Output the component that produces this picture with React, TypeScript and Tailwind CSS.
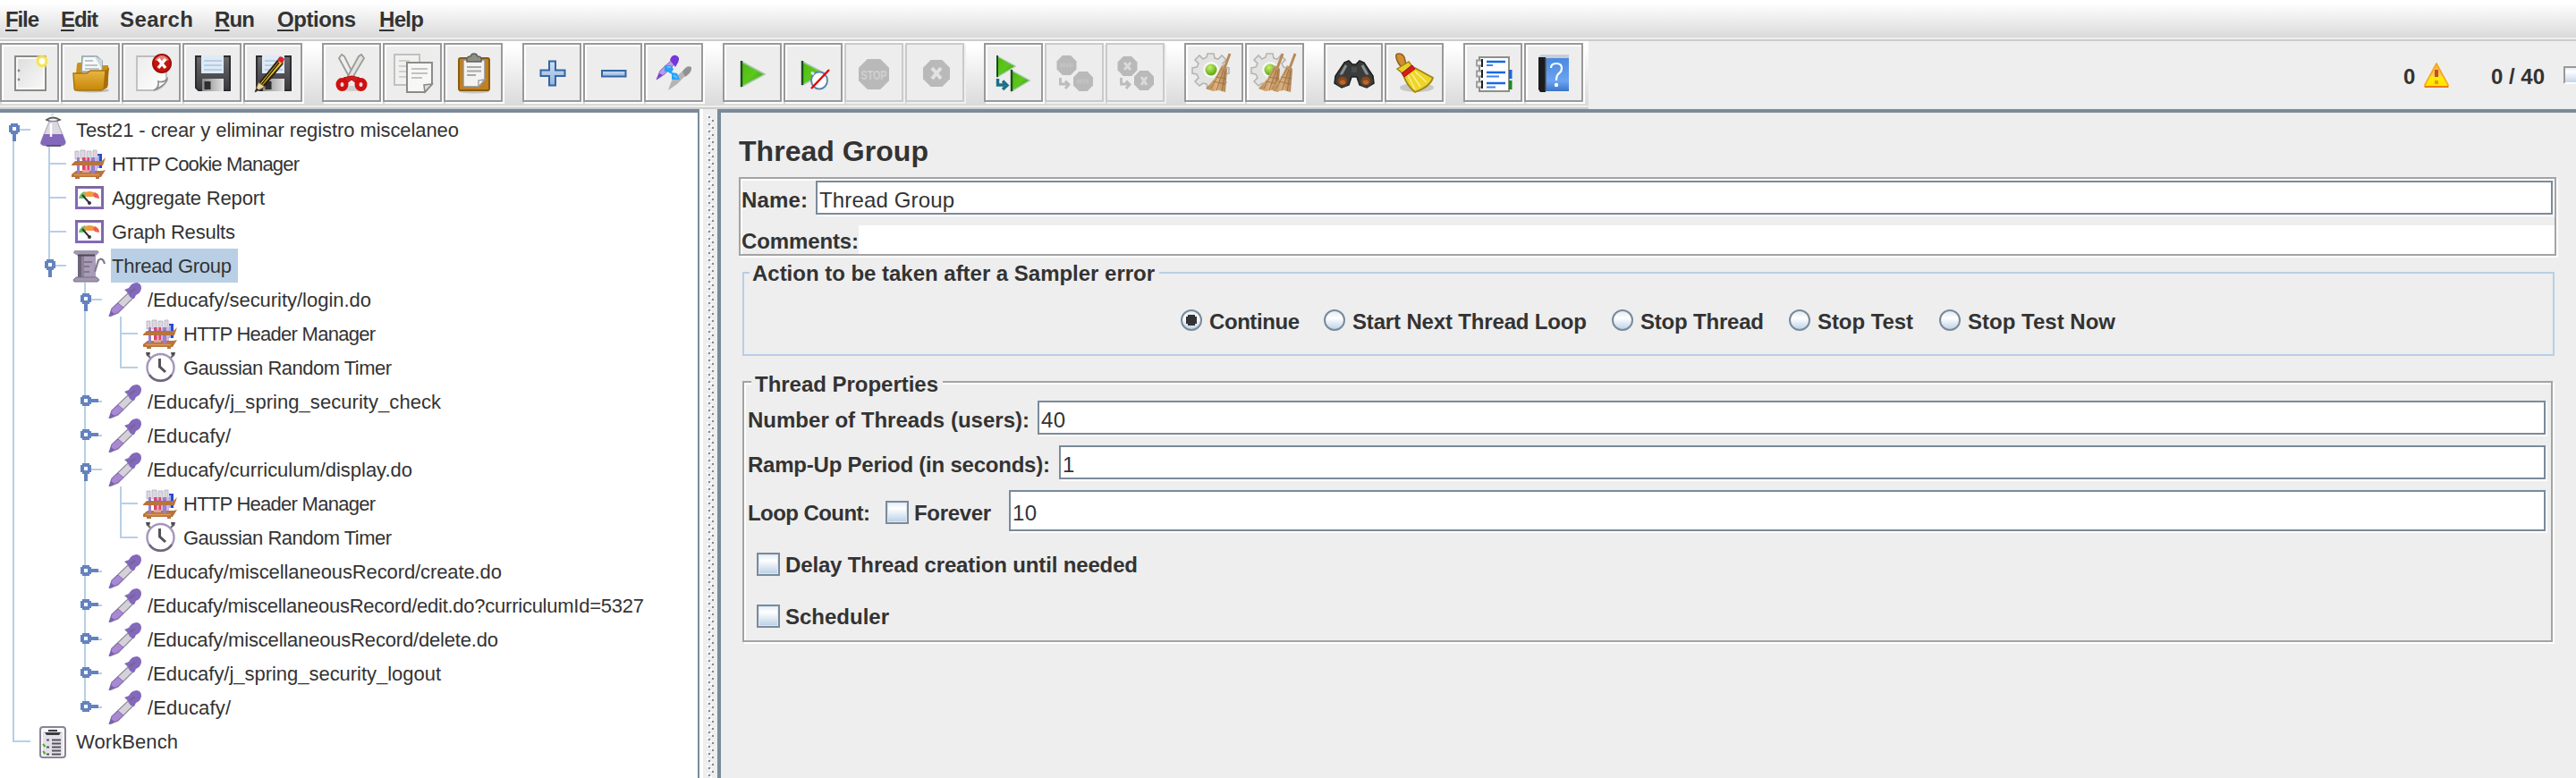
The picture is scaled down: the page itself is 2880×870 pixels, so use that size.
import { useLayoutEffect, useRef } from "react";
import type { ReactNode } from "react";

/** Text whose tracking is adjusted so that it fills a given width. */
function Fit({ w, className = "", children }: { w: number; className?: string; children: ReactNode }) {
  const ref = useRef<HTMLSpanElement>(null);
  useLayoutEffect(() => {
    const el = ref.current;
    if (!el) return;
    el.style.letterSpacing = "0px";
    const natural = el.getBoundingClientRect().width;
    const n = (el.textContent ?? "").length;
    if (n > 1) el.style.letterSpacing = `${(w - natural) / (n - 1)}px`;
  }, [w]);
  return (
    <span ref={ref} className={`inline-block shrink-0 whitespace-pre ${className}`}>
      {children}
    </span>
  );
}

/* ---------- toolbar icons (66 x 66 canvas) ---------- */

function Defs() {
  return (
    <svg width="0" height="0" className="absolute">
      <defs>
        <linearGradient id="page" x1="0" y1="0" x2="1" y2="1">
          <stop offset="0" stopColor="#dcdcdc" />
          <stop offset="1" stopColor="#fafafa" />
        </linearGradient>
        <linearGradient id="paper" x1="0" y1="0" x2="1" y2="1">
          <stop offset="0" stopColor="#ececec" />
          <stop offset="1" stopColor="#ffffff" />
        </linearGradient>
        <linearGradient id="folder" x1="0" y1="0" x2="0" y2="1">
          <stop offset="0" stopColor="#e9b543" />
          <stop offset="1" stopColor="#c78708" />
        </linearGradient>
        <linearGradient id="disk" x1="0" y1="0" x2="0" y2="1">
          <stop offset="0" stopColor="#6a6a6e" />
          <stop offset="1" stopColor="#3a3a3e" />
        </linearGradient>
        <linearGradient id="metal" x1="0" y1="0" x2="1" y2="0">
          <stop offset="0" stopColor="#8a8a8a" />
          <stop offset="1" stopColor="#e2e2e2" />
        </linearGradient>
        <linearGradient id="blue" x1="0" y1="0" x2="0" y2="1">
          <stop offset="0" stopColor="#cfe0f3" />
          <stop offset="1" stopColor="#8fb4de" />
        </linearGradient>
        <linearGradient id="green" x1="0" y1="0" x2="1" y2="1">
          <stop offset="0" stopColor="#4fb80e" />
          <stop offset="0.5" stopColor="#5cc81c" />
          <stop offset="1" stopColor="#3c8a0c" />
        </linearGradient>
        <radialGradient id="ball" cx="0.4" cy="0.3" r="0.8">
          <stop offset="0" stopColor="#c8f06c" />
          <stop offset="1" stopColor="#4a9a00" />
        </radialGradient>
        <linearGradient id="book" x1="0" y1="0" x2="0" y2="1">
          <stop offset="0" stopColor="#4a8ae0" />
          <stop offset="0.7" stopColor="#6ba4f2" />
          <stop offset="1" stopColor="#3c74c8" />
        </linearGradient>
        <linearGradient id="straw" x1="0" y1="0" x2="1" y2="0">
          <stop offset="0" stopColor="#b58450" />
          <stop offset="0.5" stopColor="#dcb280" />
          <stop offset="1" stopColor="#b08250" />
        </linearGradient>
        <linearGradient id="warn" x1="0" y1="0" x2="0" y2="1">
          <stop offset="0" stopColor="#f5b030" />
          <stop offset="0.5" stopColor="#fbc860" />
          <stop offset="0.62" stopColor="#fdf000" />
          <stop offset="1" stopColor="#ffe000" />
        </linearGradient>
      </defs>
    </svg>
  );
}

const Floppy = () => (
  <>
    <path d="M15 15H53V53H18L15 50Z" fill="url(#disk)" stroke="#2c2c2e" strokeWidth="2" />
    <rect x="21" y="14" width="25" height="20" fill="#dfeaf6" />
    <path d="M24 20H44M24 25H44M24 30H44" stroke="#a9c4e2" strokeWidth="1.6" />
    <rect x="22" y="40" width="24" height="14" fill="url(#metal)" />
    <rect x="24.5" y="43" width="7" height="9" fill="#2e2e30" />
  </>
);

const Gear = () => (
  <>
    <path
      d="M26 12h7l1 5 4 1 4-4 5 5-4 4 2 4 5 1v6l-5 1-2 5 4 4-5 5-4-4-4 1-1 5h-7l-1-5-4-1-4 3-5-5 4-4-2-4-5-1v-6l5-1 2-4-4-4 5-5 4 4 4-2Z"
      fill="#e3e3e2"
      stroke="#b4b4b2"
      strokeWidth="1.6"
    />
    <circle cx="30" cy="30" r="9" fill="#f6f6f5" />
    <circle cx="30" cy="30" r="6.5" fill="url(#ball)" />
  </>
);

const Broom = ({ dx = 0 }: { dx?: number }) => (
  <g transform={`translate(${dx} 0)`}>
    <path d="M51 12L45 28" stroke="#b58a5a" strokeWidth="3" />
    <path d="M42 25L48 29L46 55L39 53L32 54L24 51L34 40Z" fill="url(#straw)" />
    <path d="M42 28L30 51M44 30L36 53M46 31L42 54M32 43L46 46M35 38L47 40" stroke="#8a5f34" strokeWidth="1" opacity="0.65" />
  </g>
);

const octagon = (cx: number, cy: number, r: number) => {
  const k = r * 0.42;
  return `M${cx - k} ${cy - r}H${cx + k}L${cx + r} ${cy - k}V${cy + k}L${cx + k} ${cy + r}H${cx - k}L${cx - r} ${cy + k}V${cy - k}Z`;
};

const HookArrow = ({ color }: { color: string }) => (
  <path d="M17.5 39V46H25M23 42.500L27 46.500L23 51" fill="none" stroke={color} strokeWidth="2.8" />
);

const icons: Record<string, ReactNode> = {
  new: (
    <>
      <rect x="17" y="15" width="34" height="38" fill="url(#page)" stroke="#8a8b86" strokeWidth="2" />
      <rect x="19" y="17" width="30" height="34" fill="none" stroke="#fff" strokeWidth="1.6" />
      <circle cx="21" cy="31" r="1.4" fill="#888" />
      <circle cx="21" cy="41" r="1.4" fill="#888" />
      <circle cx="47" cy="20.5" r="5" fill="#fffef0" stroke="#f4e45e" strokeWidth="3.2" />
      <circle cx="47" cy="20.5" r="7.5" fill="none" stroke="#faf2a6" strokeWidth="1" opacity="0.7" />
    </>
  ),
  open: (
    <>
      <ellipse cx="35" cy="53" rx="19" ry="2.5" fill="#bdbdbd" />
      <path d="M18 24Q18 22 20 22H24V34H17ZM46 25H53V48H44Z" fill="#cf8f12" />
      <path d="M23 32L24 15H40L46 20V32Z" fill="#f6f8f8" stroke="#8fa0a4" strokeWidth="1.6" />
      <path d="M38 15L41 21L46 30V19Z" fill="#c9d8dc" />
      <path d="M27 20H36M27 25H41M27 29H43" stroke="#aab2b2" strokeWidth="1.6" />
      <path d="M14 34H29L33 31H50L48 51Q47 53 45 53H17Q15 53 15 50Z" fill="url(#folder)" stroke="#a87410" strokeWidth="1.4" />
      <path d="M50 31L54 27L52 50L48 52Z" fill="#a96c06" />
    </>
  ),
  close: (
    <>
      <path d="M17 15H50V42Q46 52 36 53H17Z" fill="url(#paper)" stroke="#bdbdbd" strokeWidth="1.8" />
      <path d="M36 53Q42 50 41 43Q47 45 51 40Q51 46 36 53Z" fill="#fff" stroke="#8e8e8e" strokeWidth="1.6" />
      <circle cx="45" cy="23" r="10" fill="#c4160c" stroke="#9c100c" strokeWidth="2" />
      <path d="M37 19Q45 9 53 19Q45 23 37 19Z" fill="#e88078" />
      <path d="M41 18L49 28M49 18L41 28" stroke="#fff" strokeWidth="3.4" />
    </>
  ),
  save: <Floppy />,
  saveAs: (
    <>
      <Floppy />
      <path d="M38 19L45 23L24 49L17 45Z" fill="#2a2312" />
      <path d="M40 20L43.5 22.5L21 48L18.5 46Z" fill="#f2c22c" />
      <path d="M40 22L20 47" stroke="#2a2312" strokeWidth="1.4" />
      <path d="M17 44L24 49L13 55Z" fill="#ead3a4" stroke="#7a6036" strokeWidth="1" />
      <path d="M13 55L15 50.5L17.5 52.5Z" fill="#222" />
      <path d="M38 19L40 16Q43 14 46 18L44 23Z" fill="#d8202c" />
    </>
  ),
  cut: (
    <>
      <ellipse cx="33" cy="51" rx="16" ry="3" fill="#cfcfcf" />
      <path d="M19 17L22 13L25 15L36 37L31 39Z" fill="#efefec" stroke="#9b9c98" strokeWidth="1.8" />
      <path d="M47 17L44 13L41 15L29 37L34 39Z" fill="#e2e2df" stroke="#9b9c98" strokeWidth="1.8" />
      <ellipse cx="22.500" cy="46.500" rx="4.500" ry="5" fill="#f2dada" stroke="#cf1010" strokeWidth="5" />
      <ellipse cx="43.500" cy="46.500" rx="4.500" ry="5" fill="#f2dada" stroke="#cf1010" strokeWidth="5" />
      <path d="M24 39L33 37L42 39L37 44L33 41L29 44Z" fill="#d81a1a" stroke="#b60c0c" strokeWidth="1" />
    </>
  ),
  copy: (
    <>
      <rect x="13" y="13" width="28" height="34" fill="#f1f1f0" stroke="#bcbcba" strokeWidth="1.8" />
      <path d="M18 20H30M18 26H26M18 32H26M18 38H26" stroke="#d0d0ce" strokeWidth="1.8" />
      <path d="M27 22H55V46L47 55H27Z" fill="#f7f7f6" stroke="#8b8c88" strokeWidth="2" />
      <path d="M55 46L46 47L47 55Z" fill="#dedede" stroke="#8b8c88" strokeWidth="1.6" />
      <path d="M32 29H50M32 34H50M32 39H44" stroke="#c2c2c0" strokeWidth="1.8" />
    </>
  ),
  paste: (
    <>
      <ellipse cx="34" cy="54" rx="17" ry="2.5" fill="#c4c4c4" />
      <rect x="17" y="17" width="34" height="36" rx="2" fill="#c1801f" stroke="#8a5a10" strokeWidth="2" />
      <path d="M22 19H46V42L39 49H22Z" fill="#f3f3f2" stroke="#8d8e8a" strokeWidth="1.4" />
      <path d="M46 41L39 42L39 49Z" fill="#fff" stroke="#9c9c9c" strokeWidth="1.4" />
      <path d="M26 27H42M26 31.500H42M26 36H36" stroke="#a8a8a6" strokeWidth="1.8" />
      <path d="M26 21V17Q27 15 30 15Q31 12 34 12Q37 12 38 15Q42 15 42 18V21Z" fill="#8d8e86" stroke="#5f605a" strokeWidth="1.4" />
    </>
  ),
  plus: <path d="M30 20.500H37V30.500H47.500V37H37V47.500H30V37H20.500V30.500H30Z" fill="url(#blue)" stroke="#3465a4" strokeWidth="2" />,
  minus: <rect x="21" y="31" width="26.5" height="6.5" fill="url(#blue)" stroke="#3465a4" strokeWidth="2" />,
  toggle: (
    <>
      <path d="M27 53L31 42L46 29L50 33L37 46Z" fill="#b4b4b4" />
      <path d="M43 32Q48 24 53 27Q54 33 46 38Z" fill="#929292" />
      <path d="M14 41L18 31L30 20L34 24L23 35Z" fill="#b79ae8" stroke="#8a72b4" strokeWidth="1" />
      <path d="M14 41L17 34L21 36Z" fill="#7d3be0" />
      <path d="M29 19Q31 13 36 14Q41 16 38 22L35 27Z" fill="#7638d8" />
      <path d="M23 32V25H30L33 29L31 33L37 34L40 41H31V35L26 32Z" fill="#28a2f8" />
      <path d="M26 27L30 27M33 36L37 39" stroke="#7cc8ff" strokeWidth="1.5" />
    </>
  ),
  start: (
    <>
      <path d="M21 21L47 35L21 49Z" fill="url(#green)" stroke="#9ec6a4" strokeWidth="1.6" />
      <path d="M21 20V49" stroke="#1d4a22" strokeWidth="2.4" />
    </>
  ),
  startNoTimers: (
    <>
      <path d="M21 21L46 34L21 47Z" fill="url(#green)" stroke="#9ec6a4" strokeWidth="1.6" />
      <path d="M21 20V47" stroke="#1d4a22" strokeWidth="2.4" />
      <ellipse cx="40" cy="42" rx="9" ry="9.5" fill="#fff" stroke="#5d86b0" strokeWidth="2" />
      <path d="M31 33L34 35M47 33L49 35" stroke="#dfe8f0" strokeWidth="3" />
      <path d="M31 51L51 30" stroke="#e00000" strokeWidth="2.4" />
    </>
  ),
  stop: (
    <>
      <path d={octagon(33, 35, 17)} fill="#b9b9b9" />
      <text x="33" y="40.500" textAnchor="middle" textLength="29" lengthAdjust="spacingAndGlyphs" fontFamily="Liberation Sans" fontWeight="700" fontSize="15" fill="#d0d0d0">STOP</text>
    </>
  ),
  shutdown: (
    <>
      <path d={octagon(35, 34, 15)} fill="#b9b9b9" />
      <path d="M30 28L40 40M40 28L30 40" stroke="#e2e2e2" strokeWidth="4" />
    </>
  ),
  remoteStart: (
    <>
      <path d="M15 15L35 26L15 38Z" fill="url(#green)" stroke="#9ec6a4" strokeWidth="1.4" />
      <path d="M15 14V38" stroke="#1d4a22" strokeWidth="2" />
      <path d="M31 31L51 42L31 54Z" fill="url(#green)" stroke="#9ec6a4" strokeWidth="1.4" />
      <path d="M31 30V54" stroke="#1d4a22" strokeWidth="2.4" />
      <path d="M15.500 40V47H23M21 42.500L26 47.500L21 52" fill="none" stroke="#1a7088" strokeWidth="3.4" />
    </>
  ),
  remoteStop: (
    <>
      <path d={octagon(24.5, 25, 11)} fill="#b9b9b9" />
      <path d={octagon(43, 43, 11)} fill="#b9b9b9" />
      <path d="M17 25H32M36 43H50" stroke="#c2c2c2" strokeWidth="5" strokeDasharray="2.5 1" />
      <HookArrow color="#bcbcbc" />
    </>
  ),
  remoteShutdown: (
    <>
      <path d={octagon(24.5, 26, 11)} fill="#b9b9b9" />
      <path d={octagon(43, 42, 11)} fill="#b9b9b9" />
      <path d="M21 22L28 30M28 22L21 30M40 38L46 47M46 38L40 47" stroke="#dadada" strokeWidth="3" />
      <HookArrow color="#bcbcbc" />
    </>
  ),
  clear: (
    <>
      <Gear />
      <Broom />
    </>
  ),
  clearAll: (
    <>
      <g transform="translate(-2 0)">
        <Gear />
      </g>
      <Broom dx={-9} />
      <Broom dx={5} />
    </>
  ),
  search: (
    <>
      <path d="M23 22L28 20L32 24H36L40 20L45 22L55 37L56 45L48 50L40 47L37 38H31L28 47L20 50L12 45L13 37Z" fill="#3a3c3c" stroke="#1c1e1e" strokeWidth="1.5" />
      <path d="M25 25L19 36M43 25L49 36" stroke="#8a8f8f" strokeWidth="3" />
      <path d="M31 27H37V33H31Z" fill="#4a4e4e" />
      <ellipse cx="21" cy="42.5" rx="6.500" ry="6" fill="#8a4618" stroke="#3c3c3c" strokeWidth="2.4" />
      <ellipse cx="47" cy="42.5" rx="6.500" ry="6" fill="#8a4618" stroke="#3c3c3c" strokeWidth="2.4" />
      <ellipse cx="21" cy="44" rx="3.2" ry="2.600" fill="#b8682c" />
      <ellipse cx="47" cy="44" rx="3.2" ry="2.600" fill="#b8682c" />
    </>
  ),
  searchReset: (
    <>
      <ellipse cx="36" cy="50" rx="19" ry="5" fill="#c8c8c8" />
      <path d="M13 16Q12 12 16 12Q20 12 22 16L24 24L19 27Q14 22 13 16Z" fill="#d18f34" stroke="#94601a" strokeWidth="1.6" />
      <path d="M14 29L22 24L27 21L30 25L20 34Z" fill="#e8d028" stroke="#9c8410" strokeWidth="1.4" />
      <path d="M21 36L34 28L54 39Q51 49 34 55Q25 48 21 36Z" fill="#edd42a" stroke="#a08612" strokeWidth="1.8" />
      <path d="M26 36L34 52M30 34L40 49M34 32L47 44" stroke="#fbf08a" strokeWidth="1.5" />
      <path d="M19 34L31 25L34 29L22 38Z" fill="#d81c1c" stroke="#a80c0c" strokeWidth="1" />
    </>
  ),
  functionHelper: (
    <>
      <rect x="18" y="16" width="33" height="38" fill="#fff" stroke="#8e8e8e" strokeWidth="2" />
      <rect x="51" y="30" width="3.5" height="10" fill="#1a66e0" />
      <rect x="51" y="42" width="3.5" height="10" fill="#1c8a1c" />
      <path d="M26 21H47M26 33H47M26 45H47" stroke="#1668e6" strokeWidth="2.4" />
      <path d="M26 25H33M26 37.500H40M26 49.500H36" stroke="#3c84ee" strokeWidth="2" />
      <path d="M21 19.500H15V25.500H21M21 31.500H15V37.500H21M21 43.500H15V49.500H21" fill="#eee" stroke="#9a9a9a" strokeWidth="1.8" />
      <path d="M21 18V27M21 30V39M21 42V51" stroke="#222" strokeWidth="2" />
    </>
  ),
  help: (
    <>
      <path d="M16 16L19 13H50V17H16Z" fill="#c9cdd4" />
      <rect x="23" y="17" width="27" height="37" fill="url(#book)" />
      <path d="M16 16H24V55H18L16 52Z" fill="#1c1c1e" />
      <path d="M24 17V54" stroke="#555" strokeWidth="1.4" />
      <path d="M30 28Q30 23 36 23Q42 23 42 28Q42 32 39 34Q36 36 36 42" fill="none" stroke="#fff" strokeWidth="2.2" />
      <circle cx="36" cy="47" r="2.2" fill="#fff" />
    </>
  ),
};

const groups: { name: string; off?: boolean }[][] = [
  [{ name: "new" }, { name: "open" }, { name: "close" }, { name: "save" }, { name: "saveAs" }],
  [{ name: "cut" }, { name: "copy" }, { name: "paste" }],
  [{ name: "plus" }, { name: "minus" }, { name: "toggle" }],
  [{ name: "start" }, { name: "startNoTimers" }, { name: "stop", off: true }, { name: "shutdown", off: true }],
  [{ name: "remoteStart" }, { name: "remoteStop", off: true }, { name: "remoteShutdown", off: true }],
  [{ name: "clear" }, { name: "clearAll" }],
  [{ name: "search" }, { name: "searchReset" }],
  [{ name: "functionHelper" }, { name: "help" }],
];

function ToolButton({ name, off }: { name: string; off?: boolean }) {
  return (
    <button
      className={
        off
          ? "h-[66px] w-[66px] border-2 border-[#cacaca] bg-[#ededed] shadow-[2px_2px_0_#efefef]"
          : "h-[66px] w-[66px] border-2 border-[#999] bg-[#ededed] shadow-[2px_2px_0_#fff,inset_2px_2px_0_#fff]"
      }
    >
      <svg viewBox="0 0 66 66" className="-m-[2px] h-[66px] w-[66px]">
        {icons[name]}
      </svg>
    </button>
  );
}

function MenuBar() {
  const items: [string, string, number, string][] = [
    ["F", "ile", 38, "w-[62px]"],
    ["E", "dit", 42, "w-[66px]"],
    ["", "Search", 82, "w-[106px]"],
    ["R", "un", 45, "w-[70px]"],
    ["O", "ptions", 88, "w-[114px]"],
    ["H", "elp", 50, "w-[80px]"],
  ];
  return (
    <nav className="flex h-[46px] border-b-2 border-[#ccc] bg-[#eee] pb-[2px]">
      <div className="flex flex-1 bg-linear-to-b from-white from-8% to-[#dadada] pl-[6px] text-[24px] leading-[43px] font-bold">
        {items.map(([m, rest, w, box]) => (
          <div key={rest} className={box}>
            <Fit w={w}>
              {m && <span className="underline decoration-2 underline-offset-[3px] [text-decoration-skip-ink:none]">{m}</span>}
              {rest}
            </Fit>
          </div>
        ))}
      </div>
    </nav>
  );
}

function Toolbar() {
  return (
    <div className="flex h-[76px] justify-between bg-[#eee]">
      <div className="flex w-[1776px] flex-col border-b-2 border-[#ccc] bg-[#eee] pb-[2px]">
        <div className="flex flex-1 gap-[22px] bg-linear-to-b from-white from-8% to-[#dadada] pt-[2px]">
          {groups.map((g) => (
            <div key={g[0].name} className="flex gap-[2px]">
              {g.map((b) => (
                <ToolButton key={b.name} {...b} />
              ))}
            </div>
          ))}
        </div>
      </div>
      <div className="flex w-[193px] shrink-0 pt-[24px] text-[24px] leading-[31px] font-bold">
        <span className="w-[23px] shrink-0">0</span>
        <svg viewBox="0 0 28 28" className="h-[28px] w-[28px] shrink-0">
          <path d="M14 1L27 25V27H1V25Z" fill="url(#warn)" stroke="#f5a818" strokeWidth="1.6" />
          <path d="M1 27H27" stroke="#ee7a10" strokeWidth="2" />
          <path d="M14 8V16" stroke="#c4501c" strokeWidth="4" />
          <path d="M14 20V24" stroke="#e8941c" strokeWidth="4" />
        </svg>
        <div className="ml-[47px] w-[81px] shrink-0">
          <Fit w={60}>0 / 40</Fit>
        </div>
        <span className="mt-[4px] h-[20px] w-[14px] shrink-0 border-2 border-r-0 border-[#999] border-b-white bg-linear-to-b from-[#e8eff7] via-white via-25% to-[#c4d6ea]" />
      </div>
    </div>
  );
}

/* ---------- tree ---------- */

const TestTubes = () => (
  <>
    <path d="M4 5H8V14H4ZM10 4H15V14H10ZM17 5H22V14H17ZM24 4H28V14H24Z" fill="#dcd8e2" stroke="#b4aebc" strokeWidth="0.8" />
    <path d="M6 12H9V30H6ZM22 12H26V30H22Z" fill="#9a80c8" />
    <path d="M12 12H20V29H12Z" fill="#e04468" />
    <path d="M15.500 12H17.500V29H15.500Z" fill="#f0b4c8" />
    <path d="M20 14H22V29H20ZM26 12H29V29H26Z" fill="#c9b8e4" />
    <path d="M29 8H34V24H29Z" fill="#2c4cd0" />
    <path d="M29 10H31V24H29Z" fill="#9cb0ec" />
    <path d="M0 20L4 16H34L38 12L35 21H0Z" fill="#b8743c" />
    <path d="M6 15.500H9V17H6ZM12 15.500H20V17H12ZM22 15.500H26V17H22Z" fill="#8c6cb0" />
    <path d="M0 34V31L5 27H34L38 26L33 34H31V36H27V34H9V36H4V34Z" fill="#b8743c" />
    <path d="M6 26H9V30H6ZM22 26H26V30H22Z" fill="#9a80c8" />
    <path d="M12 26H20V29H12Z" fill="#e0a0a0" />
    <path d="M3 31.500H31" stroke="#d89858" strokeWidth="1.6" />
  </>
);

const Report = () => (
  <>
    <rect x="5.5" y="7.5" width="29" height="23" fill="#fff" stroke="#8468bc" strokeWidth="3" />
    <path d="M4 7H36" stroke="#7c6a94" strokeWidth="2" />
    <path d="M35.200 7V32" stroke="#7c6a94" strokeWidth="1.6" />
    <path d="M8 20Q9 14 15 12L17 17L13 20Z" fill="#62c060" />
    <path d="M13 14Q20 10 27 14L25 18H17Z" fill="#f09a40" />
    <path d="M26 13Q31 15 31 20L26 19L24 16Z" fill="#f05c54" />
    <path d="M12 16L20 25" stroke="#333" strokeWidth="2" />
    <circle cx="20" cy="25" r="2" fill="#333" />
  </>
);

const Spool = () => (
  <>
    <path d="M7 6H27V33H7Z" fill="#a89cb8" />
    <path d="M7 6H11V33H7Z" fill="#6c6478" />
    <path d="M11 6H14V33H11Z" fill="#8c8298" />
    <path d="M3 2H29L31 4L27 8H7L2 5Z" fill="#a297b0" />
    <path d="M7 7.500H26" stroke="#4c4654" strokeWidth="2" />
    <path d="M14 15H23M14 20H20M14 26H20" stroke="#74697f" strokeWidth="1.6" />
    <path d="M26 26L30 13Q35 9 37 17" fill="none" stroke="#82788e" strokeWidth="2.2" />
    <path d="M5 32H28L31 35L29 37H3L2 35Z" fill="#a297b0" stroke="#786e84" strokeWidth="1" />
  </>
);

const Dropper = () => (
  <>
    <path d="M2 38L5 29L24 11L30 16L12 34L5 37Z" fill="#d5d1da" stroke="#8d8796" strokeWidth="1.2" />
    <path d="M3 37L5 29L12 23L18 28L11 34L5 36Z" fill="#a98ad2" stroke="#8468bc" strokeWidth="1" />
    <path d="M2 38L4 32L8 35Z" fill="#7c5cb4" />
    <path d="M19 8L24 6Q27 0 33 0Q38 1 38 6Q38 11 32 14L30 18Q26 18 24 14Q23 11 19 8Z" fill="#8468bc" />
    <path d="M25 11L31 7" stroke="#71688a" strokeWidth="2" />
  </>
);

const Timer = () => (
  <>
    <path d="M3 2H8L7 6H4ZM36 2H31L32 6H35Z" fill="#4c4a50" />
    <path d="M5 5L9 9M34 5L30 9" stroke="#666" strokeWidth="2" />
    <circle cx="19.5" cy="19" r="15" fill="#fff" stroke="#a496bc" strokeWidth="2.4" />
    <path d="M7 27A15 15 0 0 0 32 27" fill="none" stroke="#70667c" strokeWidth="2.4" />
    <path d="M18.500 9V18L25 24" fill="none" stroke="#55525a" strokeWidth="3" />
  </>
);

const Flask = () => (
  <>
    <path d="M17 3L20 1" stroke="#d8d4e0" strokeWidth="2" />
    <path d="M12 8Q19 3 27 8Q19 12 12 8Z" fill="#f2f2f2" stroke="#5c5a60" strokeWidth="1.8" />
    <path d="M15 10H24L33 32Q34 36 29 37H10Q4 36 6 32Z" fill="#dcd8e2" stroke="#b4aebc" strokeWidth="1.2" />
    <path d="M9 24H30L33 32Q34 36 29 37H10Q4 36 6 32Z" fill="#8468bc" />
    <path d="M17 12V27" stroke="#fff" strokeWidth="2.4" />
    <path d="M12 37H28" stroke="#5c5268" strokeWidth="1.8" />
  </>
);

const Bench = () => (
  <>
    <rect x="5" y="3" width="28" height="34" rx="3" fill="#fafafa" stroke="#8a8296" strokeWidth="2" />
    <rect x="8" y="8" width="22" height="27" fill="#e4e1ea" />
    <path d="M10 9H28L26 12H12ZM14 6H24V8H14Z" fill="#3c3c40" />
    <path d="M18 17.500H28M18 21.500H28M18 25.500H28M18 29.500H28M18 33.500H28" stroke="#55535a" strokeWidth="2" />
    <path d="M12 17.500H15M12 25.500H15M12 33.500H15" stroke="#55535a" strokeWidth="2" />
    <path d="M8 22L10.500 25M8 30L10.500 33" stroke="#44b820" strokeWidth="2" />
  </>
);

const treeIcons: Record<string, ReactNode> = {
  flask: <Flask />,
  tubes: <TestTubes />,
  report: <Report />,
  spool: <Spool />,
  dropper: <Dropper />,
  timer: <Timer />,
  bench: <Bench />,
};

/**
 * Guide cells, one character per level:
 * "." empty, "|" line passing through, "t" tee, "e" last child,
 * "o"/"O" opened node (O: line goes on), "c"/"C" collapsed node (C: line goes on),
 * "r" opened root without a line above.
 */
function Guide({ kind }: { kind: string }) {
  const line = "#b8cfe5";
  const knob = "#6382bf";
  const isKnob = "oOcCr".includes(kind);
  const y1 = kind === "r" ? 18 : 0;
  const y2 = "|tOCr".includes(kind) ? 38 : 20;
  return (
    <svg viewBox="0 0 40 38" className="h-[38px] w-[40px] shrink-0" shapeRendering="crispEdges">
      {kind !== "." && <rect x="14" y={y1} width="2" height={y2 - y1} fill={line} />}
      {kind !== "." && kind !== "|" && <rect x="14" y="18" width="20" height="2" fill={line} />}
      {isKnob && (
        <g fill={knob}>
          {"cC".includes(kind) ? <rect x="20" y="16" width="10" height="4" /> : <rect x="14" y="22" width="4" height="10" />}
          <path d="M12 12H20V14H22V22H20V24H12V22H10V14H12Z" />
          <rect x="14" y="16" width="4" height="4" fill="#fff" />
        </g>
      )}
    </svg>
  );
}

const rows: { g: string; icon: string; label: string; w: number; on?: boolean }[] = [
  { g: "r", icon: "flask", label: "Test21 - crear y eliminar registro miscelaneo", w: 428 },
  { g: "|t", icon: "tubes", label: "HTTP Cookie Manager", w: 210 },
  { g: "|t", icon: "report", label: "Aggregate Report", w: 171 },
  { g: "|t", icon: "report", label: "Graph Results", w: 138 },
  { g: "|o", icon: "spool", label: "Thread Group", w: 134, on: true },
  { g: "|.O", icon: "dropper", label: "/Educafy/security/login.do", w: 250 },
  { g: "|.|t", icon: "tubes", label: "HTTP Header Manager", w: 215 },
  { g: "|.|e", icon: "timer", label: "Gaussian Random Timer", w: 233 },
  { g: "|.C", icon: "dropper", label: "/Educafy/j_spring_security_check", w: 328 },
  { g: "|.C", icon: "dropper", label: "/Educafy/", w: 93 },
  { g: "|.O", icon: "dropper", label: "/Educafy/curriculum/display.do", w: 296 },
  { g: "|.|t", icon: "tubes", label: "HTTP Header Manager", w: 215 },
  { g: "|.|e", icon: "timer", label: "Gaussian Random Timer", w: 233 },
  { g: "|.C", icon: "dropper", label: "/Educafy/miscellaneousRecord/create.do", w: 396 },
  { g: "|.C", icon: "dropper", label: "/Educafy/miscellaneousRecord/edit.do?curriculumId=5327", w: 555 },
  { g: "|.C", icon: "dropper", label: "/Educafy/miscellaneousRecord/delete.do", w: 392 },
  { g: "|.C", icon: "dropper", label: "/Educafy/j_spring_security_logout", w: 328 },
  { g: "|.c", icon: "dropper", label: "/Educafy/", w: 93 },
  { g: "e", icon: "bench", label: "WorkBench", w: 114 },
];

function Tree() {
  return (
    <aside className="flex w-[786px] shrink-0 bg-white">
      <div className="w-[782px] overflow-hidden border-t-4 border-r-2 border-[#7a8a99]">
        {rows.map((r, i) => (
          <div key={i} className="flex h-[38px] text-[22px] leading-[40px]">
            {r.g.split("").map((k, j) => (
              <Guide key={j} kind={k} />
            ))}
            <svg viewBox="0 0 38 38" className="mr-[6px] h-[38px] w-[38px] shrink-0">
              {treeIcons[r.icon]}
            </svg>
            <div className={r.on ? "w-[142px] bg-[#b8cfe5] pl-[1px]" : "pl-[1px]"}>
              <Fit w={r.w}>{r.label}</Fit>
            </div>
          </div>
        ))}
      </div>
    </aside>
  );
}

function Splitter() {
  return (
    <div className="w-[16px] shrink-0 bg-[#eee]">
      <svg width="16" height="748" shapeRendering="crispEdges">
        <defs>
          <pattern id="bumps" x="4" y="6" width="8" height="8" patternUnits="userSpaceOnUse">
            <path d="M0 0h2v2h-2zM4 4h2v2h-2z" fill="#fff" />
            <path d="M2 2h2v2h-2zM6 6h2v2h-2z" fill="#7a8a99" />
          </pattern>
        </defs>
        <rect x="4" y="6" width="8" height="742" fill="url(#bumps)" />
      </svg>
    </div>
  );
}

/* ---------- form ---------- */

function Field({ className, children }: { className: string; children?: ReactNode }) {
  return (
    <div className={`flex-1 border-2 border-[#7a8a99] bg-white pl-[2px] text-[24px] font-normal shadow-[2px_2px_0_#fff] ${className}`}>
      {children}
    </div>
  );
}

function Check() {
  return (
    <span className="h-[26px] w-[26px] shrink-0 border-2 border-[#7a8a99] bg-linear-to-b from-[#e4edf6] via-white via-30% to-[#b8cfe5] shadow-[inset_0_0_0_1px_#dce8f4]" />
  );
}

function Radio({ on }: { on?: boolean }) {
  return (
    <svg viewBox="0 0 24 24" className="mr-[8px] h-[24px] w-[24px] shrink-0">
      <defs>
        <linearGradient id="radio" x1="0" y1="0" x2="0" y2="1">
          <stop offset="0" stopColor="#dde8f3" />
          <stop offset="0.4" stopColor="#fff" />
          <stop offset="1" stopColor="#b8cfe5" />
        </linearGradient>
      </defs>
      <circle cx="12" cy="12" r="11" fill="url(#radio)" stroke="#7a8a99" strokeWidth="2" />
      {on && <path d="M8 6H16V8H18V16H16V18H8V16H6V8H8Z" fill="#333" />}
    </svg>
  );
}

const radios: [string, number, string][] = [
  ["Continue", 101, "w-[160px]"],
  ["Start Next Thread Loop", 262, "w-[322px]"],
  ["Stop Thread", 138, "w-[198px]"],
  ["Stop Test", 107, "w-[168px]"],
  ["Stop Test Now", 165, "w-[220px]"],
];

const etched = "border-2 border-[#a3a3a3] shadow-[2px_2px_0_#fff,inset_2px_2px_0_#fff]";

function Form() {
  return (
    <main className="flex-1 border-t-4 border-l-4 border-[#7a8a99] bg-[#eee] pt-[23px] pl-[20px] text-[24px] font-bold">
      <h1 className="h-[49px] text-[32px] leading-[40px]">
        <Fit w={212}>Thread Group</Fit>
      </h1>

      <section className={`mr-[22px] h-[88px] pt-[2px] pl-[2px] ${etched}`}>
        <div className="flex h-[38px] leading-[43px]">
          <div className="w-[82px]">
            <Fit w={74} className="-ml-[1px]">Name:</Fit>
          </div>
          <Field className="mr-[2px] leading-[39px]">
            <Fit w={151}>Thread Group</Fit>
          </Field>
        </div>
        <div className="mt-[12px] flex h-[32px] leading-[35px]">
          <div className="w-[130px]">
            <Fit w={131} className="-ml-[1px]">Comments:</Fit>
          </div>
          <div className="flex-1 bg-white" />
        </div>
      </section>

      <section className="mt-[18px] mr-[24px] ml-[4px] h-[94px] border-2 border-[#b8cfe5]">
        <h2 className="-mt-[14px] ml-[6px] h-[28px] w-[458px] bg-[#eee] pl-[3px] leading-[28px]">
          <Fit w={450}>Action to be taken after a Sampler error</Fit>
        </h2>
        <div className="flex pt-[26px] pl-[488px]">
          {radios.map(([label, w, box], i) => (
            <label key={label} className={`flex h-[24px] leading-[27px] ${box}`}>
              <Radio on={i === 0} />
              <Fit w={w}>{label}</Fit>
            </label>
          ))}
        </div>
      </section>

      <section className={`mt-[28px] mr-[26px] ml-[4px] h-[292px] ${etched}`}>
        <h2 className="-mt-[12px] ml-[8px] h-[28px] w-[214px] bg-[#eee] pl-[4px] leading-[28px]">
          <Fit w={205}>Thread Properties</Fit>
        </h2>
        <div className="mt-[4px] mr-[6px] ml-[4px] flex h-[38px] leading-[43px]">
          <div className="w-[324px]">
            <Fit w={315}>Number of Threads (users):</Fit>
          </div>
          <Field className="leading-[39px]">
            <Fit w={27}>40</Fit>
          </Field>
        </div>
        <div className="mt-[12px] mr-[6px] ml-[4px] flex h-[38px] leading-[43px]">
          <div className="w-[348px]">
            <Fit w={338}>Ramp-Up Period (in seconds):</Fit>
          </div>
          <Field className="leading-[39px]">1</Field>
        </div>
        <div className="mt-[12px] mr-[6px] ml-[4px] flex h-[46px] leading-[51px]">
          <div className="w-[154px]">
            <Fit w={137}>Loop Count:</Fit>
          </div>
          <div className="pt-[12px] leading-[0]">
            <span className="flex">
              <Check />
            </span>
          </div>
          <div className="w-[112px] pl-[6px]">
            <Fit w={86}>Forever</Fit>
          </div>
          <Field className="leading-[47px]">
            <Fit w={27}>10</Fit>
          </Field>
        </div>
        <label className="mt-[24px] ml-[14px] flex h-[26px] gap-[6px] leading-[27px]">
          <Check />
          <Fit w={394}>Delay Thread creation until needed</Fit>
        </label>
        <label className="mt-[32px] ml-[14px] flex h-[26px] gap-[6px] leading-[27px]">
          <Check />
          <Fit w={116}>Scheduler</Fit>
        </label>
      </section>
    </main>
  );
}

export default function App() {
  return (
    <div className="flex h-[870px] w-[2880px] flex-col overflow-hidden bg-[#eee] font-['Liberation_Sans',Arial,sans-serif] text-[#333]">
      <Defs />
      <MenuBar />
      <Toolbar />
      <div className="flex min-h-0 flex-1">
        <Tree />
        <Splitter />
        <Form />
      </div>
    </div>
  );
}
